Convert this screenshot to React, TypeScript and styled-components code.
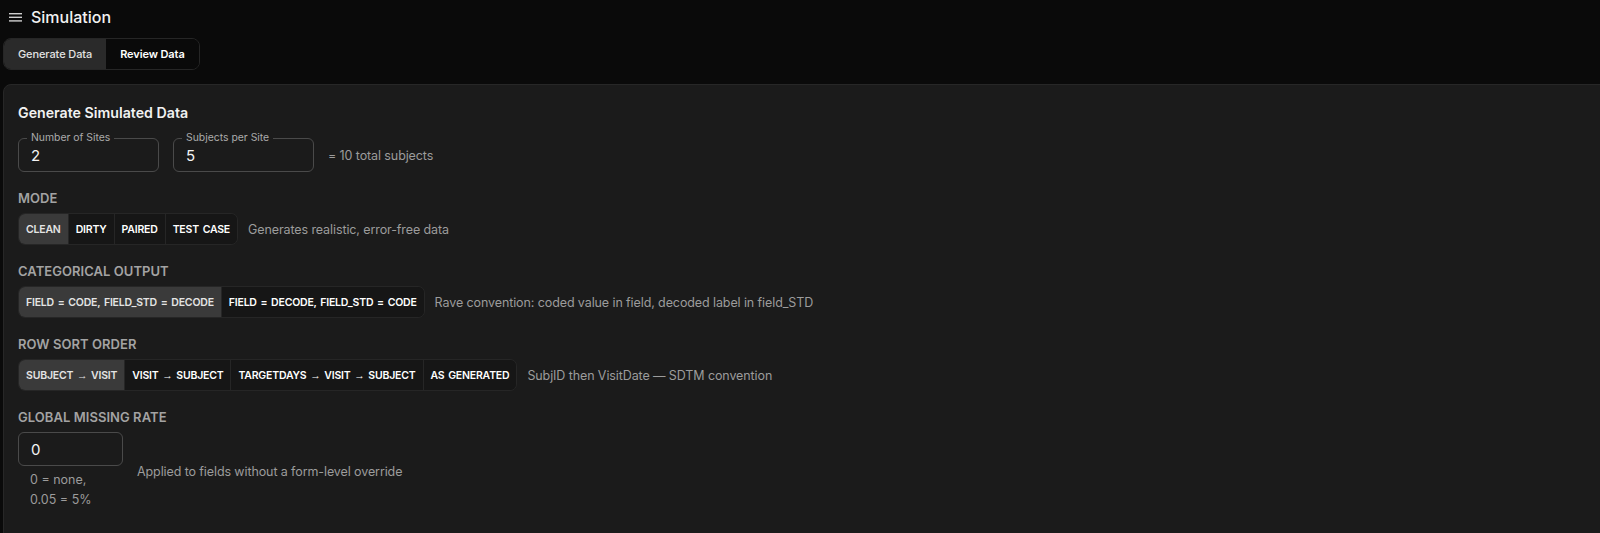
import React from "react";
import styled, { createGlobalStyle } from "styled-components";

const GlobalStyle = createGlobalStyle`
  html, body {
    margin: 0;
    padding: 0;
    background: #0a0a0a;
    overflow: hidden;
  }
  body {
    font-family: Inter, "Noto Sans", "Liberation Sans", sans-serif;
    color: #f2f2f2;
    -webkit-font-smoothing: antialiased;
  }
`;

const Page = styled.div`
  width: 100%;
  min-height: 533px;
  overflow: hidden;
`;

const Header = styled.header`
  height: 34px;
  display: flex;
  align-items: center;
  gap: 9px;
  padding-left: 9px;

  & > h1 {
    margin: 0;
    font-size: 16px;
    font-weight: 500;
    color: #f2f2f2;
  }
`;

const Tabs = styled.div`
  margin: 4px 0 0 3px;
  display: inline-flex;
  height: 32px;
  border: 1px solid #262626;
  border-radius: 8px;
  overflow: hidden;
  box-sizing: border-box;
`;

const Tab = styled.button<{ $active?: boolean }>`
  border: none;
  padding: 0 14px;
  font-family: inherit;
  font-size: 11px;
  letter-spacing: -0.1px;
  font-weight: ${(p) => (p.$active ? 500 : 600)};
  color: ${(p) => (p.$active ? "#e2e2e2" : "#ffffff")};
  background: ${(p) => (p.$active ? "#2a2a2a" : "#0a0a0a")};
  cursor: pointer;
`;

const Card = styled.section`
  margin: 14px -12px 0 3px;
  min-height: 460px;
  background: #1b1b1b;
  border: 1px solid #272727;
  border-radius: 8px;
  padding: 18px 14px 0;
  box-sizing: border-box;
`;

const CardTitle = styled.h2`
  margin: 0 0 15px;
  font-size: 14.2px;
  line-height: 20px;
  font-weight: 600;
  color: #f2f2f2;
`;

const Row = styled.div`
  display: flex;
  align-items: center;
  gap: 14px;
`;

const Field = styled.div<{ $width: number }>`
  position: relative;
  width: ${(p) => p.$width}px;
  height: 34px;
  border: 1px solid #4a4a4a;
  border-radius: 6px;
  box-sizing: border-box;
  display: flex;
  align-items: center;
  padding-left: 12px;
  font-size: 15px;
  color: #f4f4f4;
`;

const FloatingLabel = styled.span`
  position: absolute;
  top: -8px;
  left: 8px;
  padding: 0 4px;
  background: #1b1b1b;
  font-size: 10.4px;
  line-height: 14px;
  color: #ababab;
`;

const Note = styled.span`
  font-size: 12.5px;
  letter-spacing: -0.1px;
  color: #9c9c9c;
  white-space: nowrap;
`;

const Section = styled.div`
  margin-top: 18px;
  display: flex;
  flex-direction: column;
  gap: 7px;
`;

const SectionLabel = styled.div`
  font-size: 13px;
  line-height: 16px;
  font-weight: 600;
  letter-spacing: 0.05px;
  color: #a3a3a3;
  text-transform: uppercase;
`;

const ControlRow = styled.div`
  display: flex;
  align-items: center;
  gap: 10px;
`;

const Toggle = styled.div`
  display: inline-flex;
  height: 32px;
  border: 1px solid #262626;
  border-radius: 7px;
  overflow: hidden;
  box-sizing: border-box;
`;

const ToggleButton = styled.button<{ $active?: boolean }>`
  border: none;
  border-left: 1px solid #262626;
  padding: 0 7px;
  font-family: inherit;
  font-size: 10.5px;
  letter-spacing: -0.2px;
  word-spacing: 1.3px;
  font-weight: 600;
  text-transform: uppercase;
  white-space: nowrap;
  color: ${(p) => (p.$active ? "#e4e4e4" : "#ffffff")};
  background: ${(p) => (p.$active ? "#3a3a3a" : "#161616")};
  cursor: pointer;

  &:first-child {
    border-left: none;
  }
`;

const Arrow = styled.span`
  font-family: "Liberation Sans", sans-serif;
  font-weight: 400;
`;

const MissingRow = styled.div`
  display: flex;
  align-items: center;
  gap: 14px;
`;

const MissingColumn = styled.div`
  width: 105px;
  display: flex;
  flex-direction: column;
`;

const Helper = styled.p`
  margin: 4px 0 0;
  padding: 0 12px;
  font-size: 12.5px;
  line-height: 20px;
  color: #9c9c9c;
`;

const MenuIcon = () => (
  <svg width="13" height="9" viewBox="0 0 13 9" fill="none">
    <rect x="0" y="0" width="13" height="1.4" fill="#cfcfcf" />
    <rect x="0" y="3.6" width="13" height="1.4" fill="#cfcfcf" />
    <rect x="0" y="7.2" width="13" height="1.4" fill="#cfcfcf" />
  </svg>
);

// splits "A → B" labels so the arrow glyph gets its own thinner font
const withArrows = (text: string) =>
  text.split(" \u2192 ").flatMap((part, i) =>
    i === 0 ? [part] : [" ", <Arrow key={i}>{"\u2192"}</Arrow>, " ", part]
  );

type Group = {
  label: string;
  options: string[];
  active: number;
  note: string;
};

const groups: Group[] = [
  {
    label: "Mode",
    options: ["Clean", "Dirty", "Paired", "Test Case"],
    active: 0,
    note: "Generates realistic, error-free data",
  },
  {
    label: "Categorical Output",
    options: ["FIELD = CODE, FIELD_STD = DECODE", "FIELD = DECODE, FIELD_STD = CODE"],
    active: 0,
    note: "Rave convention: coded value in field, decoded label in field_STD",
  },
  {
    label: "Row Sort Order",
    options: [
      "Subject \u2192 Visit",
      "Visit \u2192 Subject",
      "TargetDays \u2192 Visit \u2192 Subject",
      "As Generated",
    ],
    active: 0,
    note: "SubjID then VisitDate \u2014 SDTM convention",
  },
];

export default function App() {
  return (
    <Page>
      <GlobalStyle />
      <Header>
        <MenuIcon />
        <h1>Simulation</h1>
      </Header>
      <Tabs>
        <Tab $active>Generate Data</Tab>
        <Tab>Review Data</Tab>
      </Tabs>
      <Card>
        <CardTitle>Generate Simulated Data</CardTitle>
        <Row>
          <Field $width={141}>
            <FloatingLabel>Number of Sites</FloatingLabel>2
          </Field>
          <Field $width={141}>
            <FloatingLabel>Subjects per Site</FloatingLabel>5
          </Field>
          <Note>= 10 total subjects</Note>
        </Row>

        {groups.map((g) => (
          <Section key={g.label}>
            <SectionLabel>{g.label}</SectionLabel>
            <ControlRow>
              <Toggle>
                {g.options.map((o, i) => (
                  <ToggleButton key={o} $active={i === g.active}>
                    {withArrows(o)}
                  </ToggleButton>
                ))}
              </Toggle>
              <Note>{g.note}</Note>
            </ControlRow>
          </Section>
        ))}

        <Section>
          <SectionLabel>Global Missing Rate</SectionLabel>
          <MissingRow>
            <MissingColumn>
              <Field $width={105}>0</Field>
              <Helper>0 = none, 0.05 = 5%</Helper>
            </MissingColumn>
            <Note>Applied to fields without a form-level override</Note>
          </MissingRow>
        </Section>
      </Card>
    </Page>
  );
}
